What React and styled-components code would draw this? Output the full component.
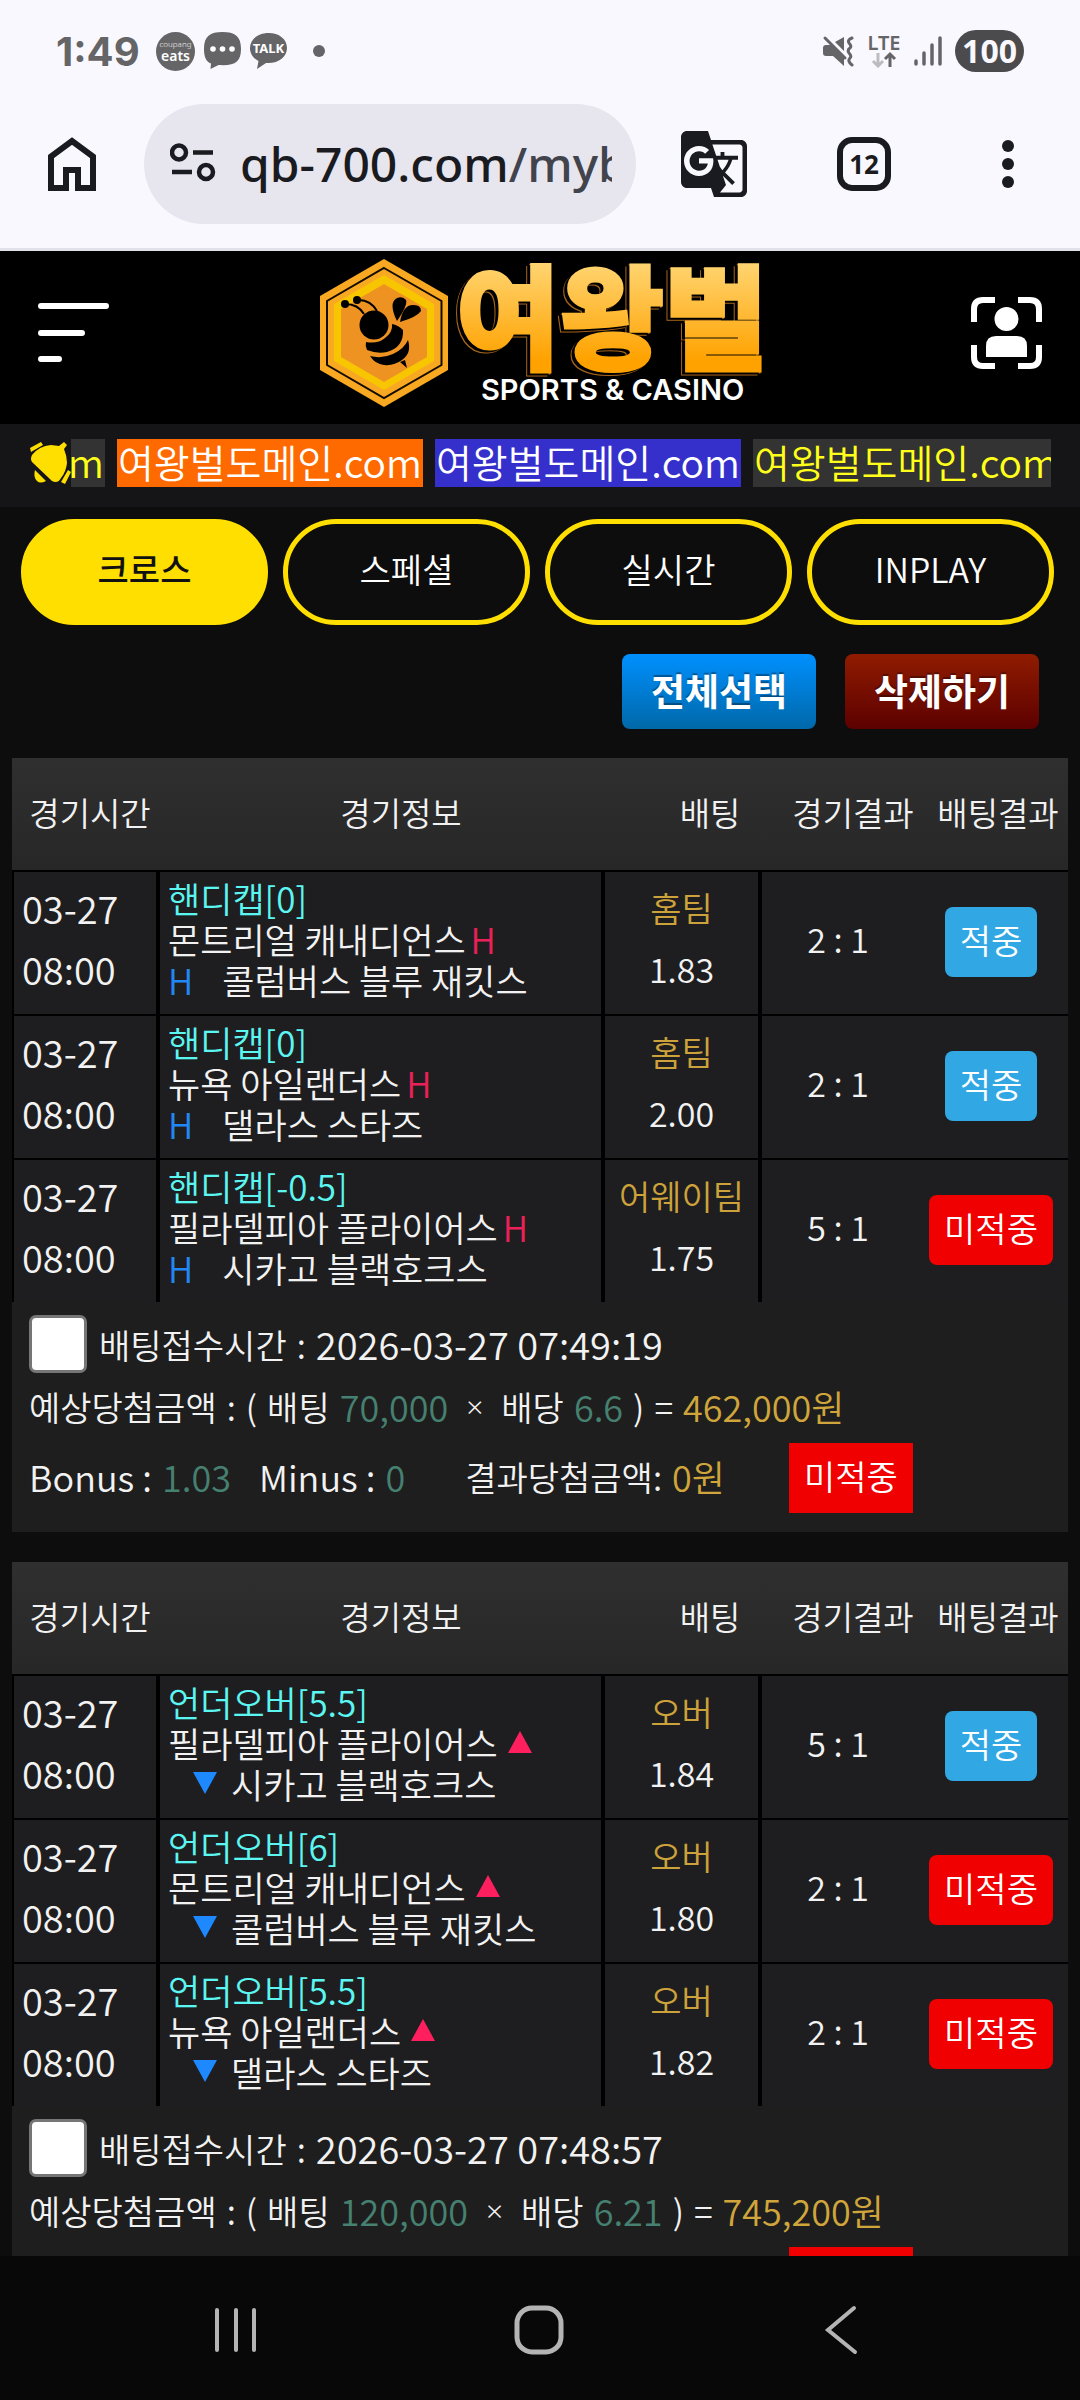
import React from 'react'
import styled, { createGlobalStyle } from 'styled-components'
import { MdGTranslate } from 'react-icons/md'

const GlobalStyle = createGlobalStyle`
    * {
        box-sizing: border-box;
    }

    body {
        margin: 0;
        background: #0d0d0d;
        color: #f2f2f2;
        font-family: 'Noto Sans CJK KR', 'Noto Sans', sans-serif;
        font-weight: 350;
        font-size: 34px;
    }

    button {
        padding: 0;
        border: 0;
        background: none;
        color: inherit;
        font: inherit;
        cursor: pointer;
    }

    svg {
        display: block;
    }
`

const Screen = styled.div`
    display: flex;
    flex-direction: column;
    height: 100vh;
    overflow: hidden;
`

/* phone status bar and browser toolbar */

const StatusBar = styled.div`
    display: flex;
    align-items: center;
    justify-content: space-between;
    flex: none;
    height: 104px;
    padding: 0 56px 2px;
    background: #f9f8ff;
    color: #656567;
    font-family: 'Noto Sans', sans-serif;
`

const StatusGroup = styled.div`
    display: flex;
    align-items: center;
    gap: ${(props) => props.$gap}px;
`

const Clock = styled.span`
    margin-right: 7px;
    font-family: Inter, sans-serif;
    font-size: 40px;
    font-weight: 700;
`

const Battery = styled.span`
    padding: 0 7px;
    border-radius: 21px;
    background: #4b4b4d;
    color: #f9f8ff;
    font-size: 32px;
    font-weight: 700;
    line-height: 42px;
`

const Toolbar = styled.div`
    display: flex;
    align-items: center;
    flex: none;
    height: 147px;
    padding: 0 66px 24px 48px;
    border-bottom: 3px solid #e1e2e9;
    background: #f9f8ff;
    color: #1a1b20;
`

const Address = styled.button`
    display: flex;
    align-items: center;
    flex: 1;
    gap: 24px;
    min-width: 0;
    height: 120px;
    margin: 0 42px 0 48px;
    padding: 0 24px 0 26px;
    border-radius: 60px;
    background: #e7e6ef;
    text-align: left;

    svg {
        flex: none;
    }
`

const Url = styled.span`
    overflow: hidden;
    white-space: nowrap;
    color: #1a1b20;
    font-family: 'Noto Sans', sans-serif;
    font-size: 48px;
    font-weight: 500;
    line-height: 72px;

    span {
        color: #42444d;
    }
`

const TabCount = styled.button`
    width: 54px;
    height: 54px;
    margin: 0 111px 0 87px;
    border: 6px solid #1a1b20;
    border-radius: 15px;
    font-family: 'Noto Sans', sans-serif;
    font-size: 26px;
    font-weight: 700;
    line-height: 42px;
`

/* site header */

const Header = styled.header`
    display: flex;
    align-items: center;
    justify-content: space-between;
    flex: none;
    height: 173px;
    padding: 0 38px 10px;
    background: #000;
`

const Mark = styled.text`
    font-family: 'Noto Sans CJK KR', sans-serif;
    font-size: 113px;
    font-weight: 900;
    filter: drop-shadow(-3px 2px 0 #000) drop-shadow(-1px 1px 0 #a8641a);
`

const Slogan = styled.text`
    fill: #fff;
    font-family: Inter, sans-serif;
    font-size: 29px;
    font-weight: 600;
`

const Notice = styled.div`
    display: flex;
    align-items: center;
    flex: none;
    height: 83px;
    padding: 0 29px 6px;
    background: #151517;
`

const NoticeWindow = styled.div`
    flex: 1;
    overflow: hidden;
`

const NoticeTrack = styled.div`
    display: flex;
    gap: 12px;
    width: max-content;
    transform: translateX(-272px);
`

const NoticeItem = styled.span`
    padding: 0 1px 4px;
    background: ${(props) => props.$bg};
    color: ${(props) => props.$color};
    font-size: 39px;
    line-height: 44px;
`

const Page = styled.main`
    flex: 1;
    min-height: 0;
    overflow-y: auto;
    scrollbar-width: none;
    padding: 12px 12px 0;
`

const Tabs = styled.nav`
    display: grid;
    grid-template-columns: repeat(4, 1fr);
    gap: 15px;
    padding: 0 14px 0 9px;
`

const Tab = styled.button`
    height: 106px;
    padding-bottom: 8px;
    border: 5px solid #ffdf00;
    border-radius: 53px;
    background: ${(props) => (props.$active ? '#ffdf00' : 'transparent')};
    color: ${(props) => (props.$active ? '#111' : '#fff')};
    font-weight: ${(props) => (props.$active ? 500 : 350)};
`

const Actions = styled.div`
    display: flex;
    justify-content: flex-end;
    gap: 29px;
    padding: 29px 29px;
`

const ActionButton = styled.button`
    width: 194px;
    height: 75px;
    padding-bottom: 4px;
    border-radius: 8px;
    background: linear-gradient(${(props) => props.$from}, ${(props) => props.$to});
    color: #fff;
    font-size: 37px;
    font-weight: 700;
    text-shadow: 0 -2px 1px rgba(0, 0, 0, 0.35);
`

/* betting slips */

const Slip = styled.section`
    margin-bottom: 30px;
    background: #1e1e1e;
`

const SlipTable = styled.table`
    display: block;
    border-spacing: 0;

    thead,
    tbody {
        display: block;
    }
`

const HeadRow = styled.tr`
    display: grid;
    grid-template-columns: 148fr 482fr 136fr 150fr 140fr;
    background: linear-gradient(#2f2f2f, #272727);
`

const HeadCell = styled.th`
    padding: 0 0 4px;
    color: #f2f2f2;
    font-size: 33px;
    font-weight: 350;
    line-height: 108px;
    white-space: nowrap;

    &:first-child {
        padding-left: 8px;
    }
`

const GameRow = styled.tr`
    display: grid;
    grid-template-columns: 144fr 445fr 157fr 156fr 154fr;
    height: 144px;
    border-top: 2px solid #000;
    background: #1e1e20;
`

const Cell = styled.td`
    display: flex;
    flex-direction: column;
    justify-content: center;
    align-items: center;
    padding: 0 0 10px;
    border-left: ${(props) => props.$line || 0}px solid #000;
    line-height: 61px;
    white-space: nowrap;
`

const TimeCell = styled(Cell)`
    align-items: flex-start;
    padding-left: 8px;
    font-size: 38px;
`

const InfoCell = styled(Cell)`
    align-items: flex-start;
    padding-left: 8px;
    font-size: 35px;
    line-height: 41px;
`

const BadgeCell = styled(Cell)`
    padding-bottom: 3px;
`

const Market = styled.span`
    color: #5cf6f2;
`

const Team = styled.span`
    display: flex;
    align-items: center;
    gap: ${(props) => props.$gap}px;
    padding-left: ${(props) => props.$indent || 0}px;
`

const Over = styled.span`
    color: #ea2058;
`

const Under = styled.span`
    color: #2287f5;
`

const Pick = styled.span`
    color: #cda23a;
`

const Badge = styled.span`
    padding: 0 15px 4px;
    border-radius: 8px;
    background: ${(props) => (props.$win ? '#31a7e4' : '#f00000')};
    color: #fff;
    line-height: 66px;
`

const SquareBadge = styled(Badge)`
    align-self: flex-start;
    border-radius: 0;
`

const SlipFoot = styled.div`
    padding: 13px 17px 19px;
`

const Accept = styled.label`
    display: flex;
    align-items: center;
    gap: 12px;
    height: 58px;
`

const Check = styled.input`
    appearance: none;
    width: 58px;
    height: 58px;
    margin: 0;
    border: 3px solid #767676;
    border-radius: 7px;
    background: #fff;
`

const Line = styled.div`
    display: flex;
    align-items: center;
    gap: 10px;
    height: 70px;
    padding-bottom: 4px;
    white-space: nowrap;
`

const DateText = styled.span`
    font-size: 38px;
    line-height: 50px;
`

const Num = styled.span`
    font-size: 36px;
`

const Value = styled(Num)`
    color: #468070;
`

const Sum = styled(Num)`
    color: #d0a53b;
`

const Times = styled.span`
    padding: 0 8px;
    font-family: 'Noto Sans', sans-serif;
    font-size: 30px;
`

const Group = styled.span`
    display: flex;
    align-items: center;
    gap: 10px;
    margin-right: ${(props) => props.$after || 0}px;
`

const NavBar = styled.nav`
    display: flex;
    align-items: center;
    justify-content: space-between;
    flex: none;
    height: 144px;
    padding: 4px 210px 0 208px;
    background: #080808;
`

const HomeIcon = () => (
    <svg width="48" height="54" viewBox="0 0 48 54" fill="none" stroke="#1a1b20" strokeWidth="6">
        <path d="M3 51V19.500L24 4l21 15.500V51H30V33H18v18z" />
    </svg>
)

const SiteIcon = () => (
    <svg width="46" height="42" viewBox="0 0 46 42" fill="none" stroke="#1a1b20" strokeWidth="4.500">
        <circle cx="9" cy="9.500" r="7" />
        <circle cx="36" cy="29" r="7" />
        <path d="M23 9.500h20M2 29h20" />
    </svg>
)

const Bubble = ({ talk }) => (
    <svg width="37" height="38" viewBox="0 0 37 38">
        {talk ? (
            <>
                <path fill="#656567" d="M18.500 1C8 1 0 7.500 0 16c0 6 3.500 10.500 8.500 13L7 37l9-6c12 1 21-6 21-15S29 1 18.500 1z" />
                <text x="18.500" y="21" fill="#fff" fontSize="13" fontWeight="700" textAnchor="middle" fontFamily="Noto Sans">TALK</text>
            </>
        ) : (
            <>
                <path fill="#656567" d="M18.500 0C6 0 0 4 0 17c0 8 2 12.500 7 14.500L6.500 37l8-4C31 34 37 30 37 17S31 0 18.500 0z" />
                <g fill="#fff">
                    <circle cx="9" cy="17" r="2.800" />
                    <circle cx="18.500" cy="17" r="2.800" />
                    <circle cx="28" cy="17" r="2.800" />
                </g>
            </>
        )}
    </svg>
)

const CoupangIcon = () => (
    <svg width="39" height="39" viewBox="0 0 39 39" textAnchor="middle" fontFamily="Noto Sans">
        <circle cx="19.500" cy="19.500" r="19.500" fill="#656567" />
        <text x="19.500" y="15" fill="#eee" fontSize="8">coupang</text>
        <text x="19.500" y="29" fill="#fff" fontSize="14" fontWeight="600">eats</text>
    </svg>
)

const MuteIcon = () => (
    <svg width="34" height="34" viewBox="0 0 34 34" fill="#656567">
        <path d="M3 14q0-3 3-3h6l12 13v8L13 22H6q-3 0-3-3zM15 8l9-5v14z" />
        <path d="M5 4l20 20" stroke="#656567" strokeWidth="3" strokeLinecap="round" />
        <path d="M32 4q-5 2-3 5 3 3 1 5-3 2-1 5 3 3 1 5-3 3 2 7" fill="none" stroke="#656567" strokeWidth="3" strokeLinecap="round" />
    </svg>
)

const LteIcon = () => (
    <svg width="34" height="34" viewBox="0 0 34 34" fill="none" strokeWidth="3">
        <text x="17" y="16" fill="#656567" fontSize="20" fontWeight="600" textAnchor="middle" fontFamily="Noto Sans">LTE</text>
        <path d="M11 19v13M6 27l5 5 5-5" stroke="#bcbcc0" />
        <path d="M23 33V20M18 25l5-5 5 5" stroke="#656567" />
    </svg>
)

const SignalIcon = () => (
    <svg width="28" height="30" viewBox="0 0 28 30" stroke="#656567" strokeWidth="3.500" strokeLinecap="round">
        <path d="M2 25v3M10 17v11M18 9v19M26 2v26" />
    </svg>
)

const DotsIcon = () => (
    <svg width="12" height="50" viewBox="0 0 12 50" fill="#1a1b20">
        <circle cx="6" cy="7" r="6" />
        <circle cx="6" cy="25" r="6" />
        <circle cx="6" cy="43" r="6" />
    </svg>
)

const MenuIcon = () => (
    <svg width="72" height="60" viewBox="0 0 72 60" stroke="#fff" strokeWidth="6" strokeLinecap="round">
        <path d="M3 3h65M3 30h41M3 56h18" />
    </svg>
)

const UserIcon = () => (
    <svg width="71" height="72" viewBox="0 0 71 72" fill="#fff">
        <path d="M3 25V12q0-9 9-9h12M47 3h12q9 0 9 9v13M68 48v12q0 9-9 9H47M24 69H12q-9 0-9-9V48" fill="none" stroke="#fff" strokeWidth="6" />
        <circle cx="35.500" cy="22" r="12" />
        <path d="M15 60V49q0-10 10-10h21q10 0 10 10v11z" />
    </svg>
)

const BellIcon = () => (
    <svg width="42" height="44" viewBox="0 0 42 44" fill="#ffdf00">
        <path d="M3 14Q10 5 22 4l8 1 5-4 3 3-3 4q3 7 3 14-1 9-6 15-3 6-9 3L3 21q-2-3 0-7z" />
        <path d="M1 7l11-6 2 3L2 11zM6 29l11 11q-6 3-9 0-4-4-2-11zM39 29l3 2-6 12-4-2z" />
    </svg>
)

const Logo = () => (
    <svg width="442" height="150" viewBox="0 0 442 150" role="img" aria-label="여왕벌 SPORTS & CASINO">
        <defs>
            <linearGradient id="gold" x1="0" y1="0" x2="0" y2="1">
                <stop offset="0.200" stopColor="#ffd572" />
                <stop offset="0.800" stopColor="#ffa200" />
            </linearGradient>
        </defs>
        <path fill="#f9a822" d="M64 1l64 37v74l-64 37L0 112V38z" />
        <path fill="none" stroke="#140c00" strokeWidth="2" d="M64 10l57.500 33v64L64 140 7 107V43z" />
        <path fill="#f7c600" d="M64 17l50 29v57l-50 29-50-29V46z" />
        <path fill="#ee9322" d="M64 26l43 25v48l-43 25-43-25V51z" />
        <g fill="#000" transform="translate(0 1)">
            <circle cx="25" cy="45" r="4" />
            <circle cx="37" cy="41" r="4" />
            <path d="M25 45q13 0 19 10M37 41q13-1 20 11" fill="none" stroke="#000" strokeWidth="2" />
            <circle cx="54" cy="66" r="14.500" />
            <path d="M77 62q-9-18 0-23 6-2 9 2 2 5-9 21z" />
            <path d="M80 63q3-18 14-17 7 0 7 6-4 6-21 11z" />
            <path d="M72 65q6 1 11 6 1 17-16 22-10 2-20-2-2-4-1-8 12 2 19-4 8-6 7-14z" />
            <path d="M88 81q4 13-6 20-8 6-18 5-9-1-14-9 12 3 23-2 11-5 15-14z" />
            <path d="M80 103l5-2 2 8z" />
        </g>
        <Mark x="136" y="102" fill="url(#gold)" stroke="url(#gold)" strokeWidth="3">여왕벌</Mark>
        <Slogan x="161" y="142">SPORTS &amp; CASINO</Slogan>
    </svg>
)

const Triangle = ({ down }) => (
    <svg width="24" height="22" viewBox="0 0 24 22">
        {down ? <path fill="#1e88ff" d="M0 0h24L12 22z" /> : <path fill="#ff1f5f" d="M0 22h24L12 0z" />}
    </svg>
)

const notices = [
    { bg: '#333', color: '#ffff1a' },
    { bg: '#ff6a00', color: '#fff' },
    { bg: '#3530cc', color: '#fff' },
    { bg: '#333', color: '#ffff1a' },
]

const slips = [
    {
        id: 'slip-1',
        type: 'handicap',
        accepted: '2026-03-27 07:49:19',
        stake: '70,000',
        odds: '6.6',
        expected: '462,000원',
        games: [
            { market: '핸디캡[0]', home: '몬트리얼 캐내디언스', away: '콜럼버스 블루 재킷스', pick: '홈팀', rate: '1.83', score: '2 : 1', win: true },
            { market: '핸디캡[0]', home: '뉴욕 아일랜더스', away: '댈라스 스타즈', pick: '홈팀', rate: '2.00', score: '2 : 1', win: true },
            { market: '핸디캡[-0.5]', home: '필라델피아 플라이어스', away: '시카고 블랙호크스', pick: '어웨이팀', rate: '1.75', score: '5 : 1', win: false },
        ],
    },
    {
        id: 'slip-2',
        type: 'total',
        accepted: '2026-03-27 07:48:57',
        stake: '120,000',
        odds: '6.21',
        expected: '745,200원',
        games: [
            { market: '언더오버[5.5]', home: '필라델피아 플라이어스', away: '시카고 블랙호크스', pick: '오버', rate: '1.84', score: '5 : 1', win: true },
            { market: '언더오버[6]', home: '몬트리얼 캐내디언스', away: '콜럼버스 블루 재킷스', pick: '오버', rate: '1.80', score: '2 : 1', win: false },
            { market: '언더오버[5.5]', home: '뉴욕 아일랜더스', away: '댈라스 스타즈', pick: '오버', rate: '1.82', score: '2 : 1', win: false },
        ],
    },
]

const Game = ({ game, type }) => {
    const total = type === 'total'

    return (
        <GameRow>
            <TimeCell $line={2}>
                <span>03-27</span>
                <span>08:00</span>
            </TimeCell>
            <InfoCell $line={4}>
                <Market>{game.market}</Market>
                <Team $gap={total ? 10 : 5}>
                    {game.home}
                    {total ? <Triangle /> : <Over>H</Over>}
                </Team>
                <Team $gap={total ? 14 : 29} $indent={total ? 25 : 0}>
                    {total ? <Triangle down /> : <Under>H</Under>}
                    {game.away}
                </Team>
            </InfoCell>
            <Cell $line={4}>
                <Pick>{game.pick}</Pick>
                <span>{game.rate}</span>
            </Cell>
            <Cell $line={4}>{game.score}</Cell>
            <BadgeCell>
                <Badge $win={game.win}>{game.win ? '적중' : '미적중'}</Badge>
            </BadgeCell>
        </GameRow>
    )
}

const BetSlip = ({ slip }) => (
    <Slip>
        <SlipTable>
            <thead>
                <HeadRow>
                    <HeadCell>경기시간</HeadCell>
                    <HeadCell>경기정보</HeadCell>
                    <HeadCell>배팅</HeadCell>
                    <HeadCell>경기결과</HeadCell>
                    <HeadCell>배팅결과</HeadCell>
                </HeadRow>
            </thead>
            <tbody>
                {slip.games.map((game) => (
                    <Game key={game.home} game={game} type={slip.type} />
                ))}
            </tbody>
        </SlipTable>
        <SlipFoot>
            <Accept htmlFor={slip.id}>
                <Check type="checkbox" id={slip.id} />
                <Group>
                    <span>배팅접수시간</span>
                    <span>:</span>
                    <DateText>{slip.accepted}</DateText>
                </Group>
            </Accept>
            <Line>
                <span>예상당첨금액</span>
                <span>:</span>
                <span>(</span>
                <span>배팅</span>
                <Value>{slip.stake}</Value>
                <Times>×</Times>
                <span>배당</span>
                <Value>{slip.odds}</Value>
                <span>)</span>
                <span>=</span>
                <Sum>{slip.expected}</Sum>
            </Line>
            <Line>
                <Group $after={18}>
                    <Num>Bonus :</Num>
                    <Value>1.03</Value>
                </Group>
                <Group $after={50}>
                    <Num>Minus :</Num>
                    <Value>0</Value>
                </Group>
                <Group $after={54}>
                    <span>결과당첨금액:</span>
                    <Sum>0원</Sum>
                </Group>
                <SquareBadge>미적중</SquareBadge>
            </Line>
        </SlipFoot>
    </Slip>
)

const App = () => {
    return (
        <Screen>
            <GlobalStyle />
            <StatusBar>
                <StatusGroup $gap={9}>
                    <Clock>1:49</Clock>
                    <CoupangIcon />
                    <Bubble />
                    <Bubble talk />
                    <svg width="48" height="12" viewBox="0 0 48 12">
                        <circle cx="23" cy="6" r="6" fill="#656567" />
                    </svg>
                </StatusGroup>
                <StatusGroup $gap={13}>
                    <MuteIcon />
                    <LteIcon />
                    <SignalIcon />
                    <Battery>100</Battery>
                </StatusGroup>
            </StatusBar>
            <Toolbar>
                <button aria-label="홈">
                    <HomeIcon />
                </button>
                <Address aria-label="주소">
                    <SiteIcon />
                    <Url>qb-700.com<span>/myb</span></Url>
                </Address>
                <button aria-label="번역">
                    <MdGTranslate size={72} />
                </button>
                <TabCount>12</TabCount>
                <button aria-label="메뉴">
                    <DotsIcon />
                </button>
            </Toolbar>
            <Header>
                <button aria-label="전체 메뉴">
                    <MenuIcon />
                </button>
                <Logo />
                <button aria-label="내 정보">
                    <UserIcon />
                </button>
            </Header>
            <Notice>
                <BellIcon />
                <NoticeWindow>
                    <NoticeTrack>
                        {notices.map((notice, i) => (
                            <NoticeItem key={i} $bg={notice.bg} $color={notice.color}>여왕벌도메인.com</NoticeItem>
                        ))}
                    </NoticeTrack>
                </NoticeWindow>
            </Notice>
            <Page>
                <Tabs>
                    <Tab $active>크로스</Tab>
                    <Tab>스페셜</Tab>
                    <Tab>실시간</Tab>
                    <Tab>INPLAY</Tab>
                </Tabs>
                <Actions>
                    <ActionButton $from="#0090ff" $to="#0068a8">전체선택</ActionButton>
                    <ActionButton $from="#901c00" $to="#5c0000">삭제하기</ActionButton>
                </Actions>
                {slips.map((slip) => (
                    <BetSlip key={slip.id} slip={slip} />
                ))}
            </Page>
            <NavBar>
                <button aria-label="최근 앱">
                    <svg width="50" height="48" viewBox="0 0 50 48" stroke="#b4b4b4" strokeWidth="4" strokeLinecap="round">
                        <path d="M9 4v40M28 4v40M46 4v40" />
                    </svg>
                </button>
                <button aria-label="홈 화면">
                    <svg width="50" height="50" viewBox="0 0 50 50" fill="none" stroke="#b4b4b4" strokeWidth="5">
                        <rect x="3" y="3" width="44" height="44" rx="15" />
                    </svg>
                </button>
                <button aria-label="뒤로">
                    <svg width="50" height="50" viewBox="0 0 50 50" fill="none" stroke="#b4b4b4" strokeWidth="4" strokeLinecap="round">
                        <path d="M34 3L8 25l27 22" />
                    </svg>
                </button>
            </NavBar>
        </Screen>
    )
}

export default App
